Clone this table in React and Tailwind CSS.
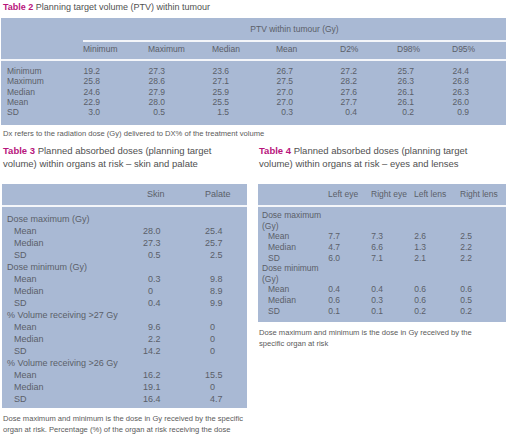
import React from "react";

const Num = ({ v, w = 10 }) => {
  const [i, f] = String(v).split(".");
  return (
    <span className="whitespace-nowrap">
      <span className="inline-block text-right" style={{ width: w }}>{i}</span>
      {f !== undefined ? "." + f : ""}
    </span>
  );
};

const t2cols = "grid grid-cols-[82px_65px_64px_64px_64px_57px_55px_1fr]";
const t2rows = [
  ["Minimum", "19.2", "27.3", "23.6", "26.7", "27.2", "25.7", "24.4"],
  ["Maximum", "25.8", "28.6", "27.1", "27.5", "28.2", "26.3", "26.8"],
  ["Median", "24.6", "27.9", "25.9", "27.0", "27.6", "26.1", "26.3"],
  ["Mean", "22.9", "28.0", "25.5", "27.0", "27.7", "26.1", "26.0"],
  ["SD", "3.0", "0.5", "1.5", "0.3", "0.4", "0.2", "0.9"],
];

const t3 = [
  ["g", "Dose maximum (Gy)"],
  ["r", "Mean", "28.0", "25.4"],
  ["r", "Median", "27.3", "25.7"],
  ["r", "SD", "0.5", "2.5"],
  ["g", "Dose minimum (Gy)"],
  ["r", "Mean", "0.3", "9.8"],
  ["r", "Median", "0", "8.9"],
  ["r", "SD", "0.4", "9.9"],
  ["g", "% Volume receiving >27 Gy"],
  ["r", "Mean", "9.6", "0"],
  ["r", "Median", "2.2", "0"],
  ["r", "SD", "14.2", "0"],
  ["g", "% Volume receiving >26 Gy"],
  ["r", "Mean", "16.2", "15.5"],
  ["r", "Median", "19.1", "0"],
  ["r", "SD", "16.4", "4.7"],
];

const t4 = [
  ["g", "Dose maximum"],
  ["g", "(Gy)"],
  ["r", "Mean", "7.7", "7.3", "2.6", "2.5"],
  ["r", "Median", "4.7", "6.6", "1.3", "2.2"],
  ["r", "SD", "6.0", "7.1", "2.1", "2.2"],
  ["g", "Dose minimum"],
  ["g", "(Gy)"],
  ["r", "Mean", "0.4", "0.4", "0.6", "0.6"],
  ["r", "Median", "0.6", "0.3", "0.6", "0.5"],
  ["r", "SD", "0.1", "0.1", "0.2", "0.2"],
];

export default function App() {
  return (
    <div
      className="w-[510px] h-[439px] bg-white overflow-hidden text-[#5b5f69]"
      style={{ fontFamily: '"Liberation Sans", Arial, sans-serif' }}
    >
      {/* Table 2 */}
      <div className="pl-[3px] pt-[2px] text-[9px] leading-[11px] text-[#505050]">
        <span className="font-bold text-[#b8157c]">Table 2</span> Planning target volume (PTV) within tumour
      </div>
      <div className="ml-[1px] mt-[5px] w-[505px] bg-[#a9b9d4] text-[8.5px] pb-[8px]">
        <div className="flex h-[22px]">
          <div className="w-[82px]" />
          <div className="flex-1 flex items-center justify-center">PTV within tumour (Gy)</div>
        </div>
        <div className="ml-[82px] h-[2px] bg-[#f4f6fa]" />
        <div className={`${t2cols} h-[17px] items-center`}>
          <div />
          {["Minimum", "Maximum", "Median", "Mean", "D2%", "D98%", "D95%"].map((h) => (
            <div key={h}>{h}</div>
          ))}
          <div />
        </div>
        <div className="h-[2px] bg-[#f4f6fa]" />
        <div className="pt-[5px]">
          {t2rows.map((r) => (
            <div key={r[0]} className={`${t2cols} leading-[10.25px]`}>
              <div className="pl-[6px]">{r[0]}</div>
              {r.slice(1).map((v, i) => (
                <div key={i}><Num v={v} /></div>
              ))}
              <div />
            </div>
          ))}
        </div>
      </div>
      <div className="pl-[3px] pt-[4px] text-[7.6px] leading-[10px] text-[#5a5a5a]">
        Dx refers to the radiation dose (Gy) delivered to DX% of the treatment volume
      </div>

      <div className="flex mt-[5px]">
        {/* Table 3 */}
        <div className="w-[258px] pl-[2px]">
          <div className="pl-[1px] w-[228px] text-[9.5px] leading-[13px] text-[#505050] h-[31px]">
            <span className="font-bold text-[#b8157c]">Table 3</span> Planned absorbed doses (planning target volume) within organs at risk – skin and palate
          </div>
          <div className="mt-[9px] w-[245px] bg-[#a9b9d4] text-[9px]">
            <div className="grid grid-cols-[141px_62px_1fr] h-[21px] items-center">
              <div />
              <div className="pl-[4px]">Skin</div>
              <div>Palate</div>
            </div>
            <div className="h-[2px] bg-[#f4f6fa]" />
            <div className="pt-[6px] pb-[3px]">
              {t3.map((r, k) =>
                r[0] === "g" ? (
                  <div key={k} className="pl-[5px] leading-[12px]">{r[1]}</div>
                ) : (
                  <div key={k} className="grid grid-cols-[141px_62px_1fr] leading-[12px]">
                    <div className="pl-[12px]">{r[1]}</div>
                    <div><Num v={r[2]} /></div>
                    <div><Num v={r[3]} /></div>
                  </div>
                )
              )}
            </div>
          </div>
          <div className="pl-[1px] pt-[5px] text-[7.6px] leading-[11px] text-[#5a5a5a] w-[248px]">
            Dose maximum and minimum is the dose in Gy received by the specific organ at risk. Percentage (%) of the organ at risk receiving the dose
          </div>
        </div>

        {/* Table 4 */}
        <div className="w-[250px]">
          <div className="pl-[1px] w-[228px] text-[9.5px] leading-[13px] text-[#505050] h-[31px]">
            <span className="font-bold text-[#b8157c]">Table 4</span> Planned absorbed doses (planning target volume) within organs at risk – eyes and lenses
          </div>
          <div className="mt-[9px] w-[248px] bg-[#a9b9d4] text-[8.5px]">
            <div className="grid grid-cols-[70px_43px_43px_46px_1fr] h-[21px] items-center whitespace-nowrap">
              <div />
              <div>Left eye</div>
              <div>Right eye</div>
              <div>Left lens</div>
              <div>Right lens</div>
            </div>
            <div className="h-[2px] bg-[#f4f6fa]" />
            <div className="pt-[3px] pb-[6px]">
              {t4.map((r, k) =>
                r[0] === "g" ? (
                  <div key={k} className="pl-[4px] leading-[10.6px]">{r[1]}</div>
                ) : (
                  <div key={k} className="grid grid-cols-[70px_43px_43px_46px_1fr] leading-[10.6px]">
                    <div className="pl-[10px]">{r[1]}</div>
                    {r.slice(2).map((v, i) => (
                      <div key={i}><Num v={v} w={5} /></div>
                    ))}
                  </div>
                )
              )}
            </div>
          </div>
          <div className="pl-[1px] pt-[5px] text-[7.6px] leading-[11px] text-[#5a5a5a] w-[235px]">
            Dose maximum and minimum is the dose in Gy received by the specific organ at risk
          </div>
        </div>
      </div>
    </div>
  );
}
